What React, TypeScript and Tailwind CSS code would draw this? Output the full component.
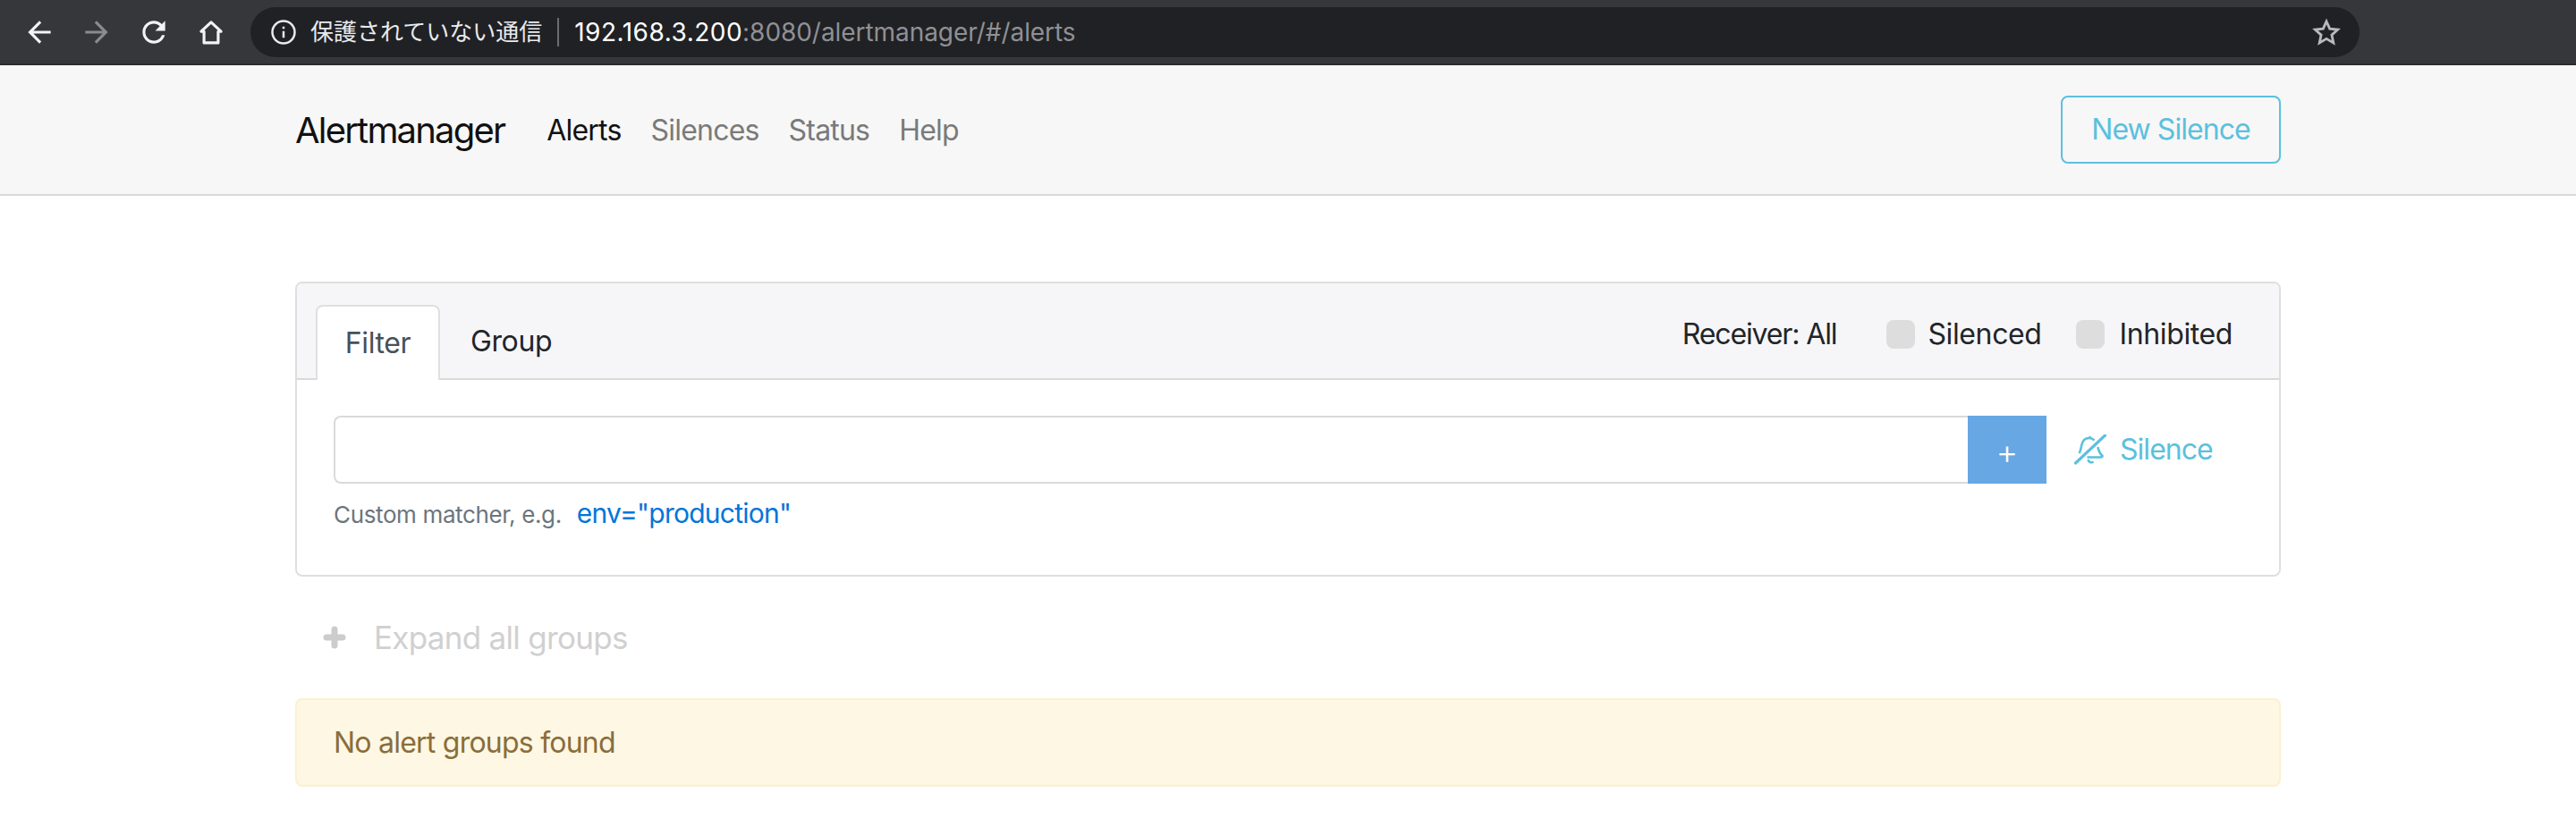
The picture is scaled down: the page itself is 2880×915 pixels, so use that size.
import React from 'react';

const ToolIcon = ({ d, dim }: { d: string; dim?: boolean }) => (
  <svg viewBox="0 0 24 24" className={`w-[38px] h-[38px] ${dim ? 'fill-[#8a8b8e]' : 'fill-[#f1f3f4]'}`}>
    <path d={d} />
  </svg>
);

const navLinks = ['Silences', 'Status', 'Help'];

const App = () => {
  return (
    <div className="min-h-[915px] bg-white overflow-hidden font-['Inter','Noto_Sans_CJK_JP',sans-serif]">
      {/* Browser chrome */}
      <div className="h-[73px] bg-[#36373b] border-b-[2px] border-[#2a2b2e] flex items-center pl-[25px] pr-[242px]">
        <div className="flex items-center gap-[26px] w-[255px]">
          <ToolIcon d="M20 11H7.830l5.590-5.590L12 4l-8 8 8 8 1.410-1.410L7.830 13H20v-2z" />
          <ToolIcon dim d="M4 13h12.170l-5.590 5.590L12 20l8-8-8-8-1.410 1.410L16.170 11H4v2z" />
          <ToolIcon d="M17.650 6.350C16.200 4.900 14.210 4 12 4c-4.420 0-7.990 3.580-7.990 8s3.570 8 7.990 8c3.730 0 6.840-2.550 7.730-6h-2.080c-.820 2.330-3.040 4-5.650 4-3.310 0-6-2.690-6-6s2.690-6 6-6c1.660 0 3.140.690 4.220 1.780L13 11h7V4l-2.350 2.350z" />
          <svg viewBox="0 0 24 24" className="w-[38px] h-[38px] fill-none stroke-[#f1f3f4] stroke-2">
            <path d="M12 5L5 11.500H7V19.500H17V11.500H19Z" strokeLinejoin="round" />
          </svg>
        </div>
        <div className="flex-1 h-[56px] rounded-full bg-[#202124] flex items-center pl-[22px] pr-[20px]">
          <svg viewBox="0 0 24 24" className="w-[30px] h-[30px] fill-none stroke-[#e8eaed] stroke-2 mr-[15px]">
            <circle cx="12" cy="12" r="10" />
            <path d="M12 11v6M12 7v2" />
          </svg>
          <span className="text-[#e8eaed] text-[26px]">保護されていない通信</span>
          <span className="w-[2px] h-[32px] bg-[#6b6c6f] ml-[17px] mr-[17px]" />
          <span className="text-white text-[28px] tracking-[0.5px]">192.168.3.200</span>
          <span className="text-[#8f9094] text-[28px] tracking-[-0.06px]">:8080/alertmanager/#/alerts</span>
          <svg viewBox="0 0 24 24" className="w-[34px] h-[34px] ml-auto fill-none stroke-[#b8b9bb] stroke-2">
            <path d="M12 3.500l2.600 5.800 6.300.7-4.700 4.200 1.300 6.200-5.500-3.200-5.500 3.200 1.300-6.200L3.100 10l6.300-.7z" />
          </svg>
        </div>
      </div>

      {/* Navbar */}
      <nav className="h-[146px] bg-[#f7f7f7] border-b-[2px] border-[#d8d8d8] px-[330px] flex items-center">
        <span className="mt-[2px] text-[40px] tracking-[-0.045em] text-[#111] mr-[47px]">Alertmanager</span>
        <span className="mt-[2px] text-[32px] tracking-[-0.025em] text-[#111] mr-[33px]">Alerts</span>
        <div className="mt-[2px] flex gap-[33px] text-[32px] tracking-[-0.025em] text-[#7a7a7a]">
          {navLinks.map((link) => (
            <span key={link}>{link}</span>
          ))}
        </div>
        <button className="ml-auto w-[246px] h-[76px] border-[2px] border-[#5bc0de] rounded-[8px] text-[32px] tracking-[-0.03em] text-[#5bc0de]">
          New Silence
        </button>
      </nav>

      <main className="px-[330px] pt-[96px]">
        {/* Filter card */}
        <div className="h-[330px] border-[2px] border-[#dfdfdf] rounded-[8px]">
          <div className="h-[108px] bg-[#f6f6f8] border-b-[2px] border-[#dadada] rounded-t-[6px] flex items-end pl-[21px] pr-[52px] tracking-[-0.024em]">
            <div className="w-[139px] h-[84px] -mb-[2px] bg-white border-[2px] border-b-0 border-[#dfdfdf] rounded-t-[8px] flex items-center justify-center text-[32px] text-[#495057]">
              Filter
            </div>
            <div className="ml-[34px] h-[84px] pt-[2px] flex items-center text-[32px] text-[#212529]">Group</div>
            <div className="ml-auto self-start mt-[41px] flex items-center text-[32px] text-[#212529] h-[32px]">
              <span className="mr-[56px] tracking-[-0.035em]">Receiver: All</span>
              <span className="w-[32px] h-[32px] rounded-[8px] bg-[#dddddd] mr-[14px]" />
              <span className="mr-[38px]">Silenced</span>
              <span className="w-[32px] h-[32px] rounded-[8px] bg-[#dddddd] mr-[17px]" />
              <span>Inhibited</span>
            </div>
          </div>
          <div className="pt-[40px] pl-[41px]">
            <div className="flex items-center">
              <div className="w-[1827px] h-[76px] border-[2px] border-r-0 border-[#dadada] rounded-l-[8px]" />
              <button className="w-[88px] h-[76px] bg-[#66a7e4] flex items-center justify-center text-white text-[38px] font-light pt-[4px]">
                +
              </button>
              <svg viewBox="0 0 36 34" className="w-[37px] h-[34px] ml-[30px] fill-none stroke-[#5bc0de] stroke-[2.6]">
                <path d="M2 32L35 1" strokeWidth="3.200" strokeLinecap="round" />
                <path d="M6 21c2-3 2-6 3-10 1-4 4-7 8-7 2.500 0 4.500 1 6 2.500M18 2v2M27 14c.5 4 2 7 5 10 0 1-1 1.500-2 1.500H15" />
                <path d="M16 28c.5 3 4 4 6 2.500" />
              </svg>
              <span className="ml-[15px] text-[32px] tracking-[-0.03em] text-[#5bc0de]">Silence</span>
            </div>
            <div className="mt-[11px] flex items-baseline">
              <span className="text-[26px] tracking-[-0.014em] text-[#6c757d]">Custom matcher, e.g.</span>
              <span className="ml-[17px] text-[30px] tracking-[-0.025em] text-[#0275d8]">env="production"</span>
            </div>
          </div>
        </div>

        {/* Expand toggle */}
        <div className="mt-[43px] pl-[31px] h-[50px] flex items-center text-[#d0d0d0] text-[35px] tracking-[-0.02em]">
          <svg viewBox="0 0 26 26" className="w-[26px] h-[26px] fill-none stroke-[#cccccc]">
            <path d="M13 4V22M4 13H22" strokeWidth="7" strokeLinecap="round" />
          </svg>
          <span className="ml-[31px]">Expand all groups</span>
        </div>

        {/* Empty state */}
        <div className="mt-[43px] h-[99px] bg-[#fdf7e3] border-[2px] border-[#fbf0d0] rounded-[8px] pl-[41px] flex items-center text-[32px] tracking-[-0.024em] text-[#8a6d3b]">
          No alert groups found
        </div>
      </main>
    </div>
  );
};

export default App;
